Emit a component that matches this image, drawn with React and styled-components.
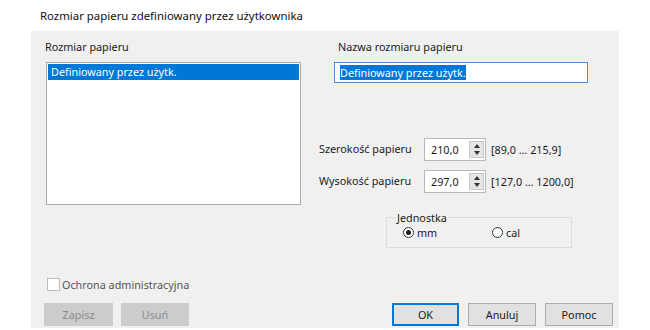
import styled, { createGlobalStyle } from "styled-components";

const Global = createGlobalStyle`
  html, body {
    margin: 0;
    padding: 0;
    background: #ffffff;
  }
  body {
    font-family: "Noto Sans", "Liberation Sans", sans-serif;
    font-size: 10.8px;
    color: #1b1b1b;
  }
`;

const Window = styled.div`
  width: 650px;
  height: 330px;
  overflow: hidden;
`;

const TitleBar = styled.div`
  height: 31px;
  padding-left: 40px;
  display: flex;
  align-items: center;
  font-size: 11.4px;
  color: #111;
  box-sizing: border-box;
  padding-bottom: 1px;
`;

const Panel = styled.div`
  margin-left: 31px;
  width: 588px;
  height: 297px;
  background: #f0f0f0;
  display: flex;
  flex-direction: column;
  box-sizing: border-box;
  padding: 8px 6px 2px 13px;
`;

const TopArea = styled.div`
  display: flex;
  gap: 18px;
  padding-left: 1px;
`;

const LeftCol = styled.div`
  width: 256px;
  display: flex;
  flex-direction: column;
`;

const FieldLabel = styled.div`
  height: 16px;
  line-height: 16px;
  margin-bottom: 7px;
  padding-left: ${(p) => p.$indent || 0}px;
`;

const ListBox = styled.div`
  margin-left: 1px;
  width: 255px;
  height: 143px;
  box-sizing: border-box;
  border: 1px solid #a9a9a9;
  background: #fff;
  padding: 1px;
`;

const ListItem = styled.div`
  height: 16px;
  line-height: 16px;
  padding-left: 3px;
  background: ${(p) => (p.$selected ? "#0078d7" : "transparent")};
  color: ${(p) => (p.$selected ? "#fff" : "#1b1b1b")};
`;

const RightCol = styled.div`
  flex: 1;
  display: flex;
  flex-direction: column;
`;

const NameInput = styled.div`
  margin-left: 15px;
  width: 254px;
  height: 21px;
  box-sizing: border-box;
  border: 1px solid #4a90d0;
  background: #fff;
  display: flex;
  align-items: center;
  padding-left: 5px;
`;

const Highlight = styled.span`
  background: #0078d7;
  color: #fff;
  line-height: 15px;
`;

const SpinRows = styled.div`
  margin-top: 55px;
  display: flex;
  flex-direction: column;
  gap: 9px;
`;

const SpinRow = styled.div`
  display: flex;
  align-items: center;
  height: 23px;
`;

const SpinLabel = styled.div`
  width: 105px;
  margin-top: -2px;
`;

const SpinBox = styled.div`
  width: 62px;
  height: 23px;
  box-sizing: border-box;
  border: 1px solid #b8b8b8;
  background: #fff;
  display: flex;
  align-items: center;
  justify-content: space-between;
  padding: 2px 1px 2px 6px;
`;

const SpinButtons = styled.div`
  width: 15px;
  height: 17px;
  box-sizing: border-box;
  border: 1px solid #c8c8c8;
  background: #e6e6e6;
  display: flex;
  flex-direction: column;
  align-items: center;
  justify-content: space-evenly;
`;

const Arrow = styled.div`
  width: 0;
  height: 0;
  border-left: 3.5px solid transparent;
  border-right: 3.5px solid transparent;
  ${(p) =>
    p.$up
      ? "border-bottom: 4px solid #333;"
      : "border-top: 4px solid #333;"}
`;

const RangeText = styled.div`
  margin-left: 5px;
`;

const GroupBox = styled.fieldset`
  margin: 19px 0 0 67px;
  width: 186px;
  height: 36px;
  box-sizing: border-box;
  border: 1px solid #dcdcdc;
  padding: 0 0 0 16px;
  display: flex;
`;

const Legend = styled.legend`
  padding: 0 1px;
  margin-left: -7px;
  line-height: 11px;
`;

const Radio = styled.label`
  width: ${(p) => p.$w || 60}px;
  display: flex;
  align-items: center;
  gap: 3px;
  height: 13px;
  line-height: 13px;
  margin-top: 3px;
`;

const RadioDot = styled.span`
  width: 11px;
  height: 11px;
  border-radius: 50%;
  box-sizing: border-box;
  border: 1px solid #333;
  background: #fff;
  display: flex;
  align-items: center;
  justify-content: center;
  &::after {
    content: "";
    width: 5px;
    height: 5px;
    border-radius: 50%;
    background: ${(p) => (p.$checked ? "#1b1b1b" : "transparent")};
  }
`;

const CheckRow = styled.div`
  margin-top: auto;
  display: flex;
  align-items: center;
  gap: 2px;
  padding-left: 3px;
  color: #555;
`;

const CheckBox = styled.span`
  width: 13px;
  height: 13px;
  box-sizing: border-box;
  border: 1px solid #bcbcbc;
  background: #fff;
`;

const ButtonRow = styled.div`
  margin-top: 11px;
  display: flex;
  justify-content: space-between;
`;

const ButtonGroup = styled.div`
  display: flex;
  gap: ${(p) => p.$gap}px;
`;

const Button = styled.div`
  width: ${(p) => p.$w || 68}px;
  height: 23px;
  box-sizing: border-box;
  display: flex;
  align-items: center;
  justify-content: center;
  border: ${(p) =>
    p.$default ? "2px solid #0078d7" : p.$disabled ? "1px solid #cccccc" : "1px solid #adadad"};
  background: ${(p) => (p.$disabled ? "#cccccc" : "#e1e1e1")};
  color: ${(p) => (p.$disabled ? "#8a8a8a" : "#1b1b1b")};
`;

function Spinner({ label, value, range }) {
  return (
    <SpinRow>
      <SpinLabel>{label}</SpinLabel>
      <SpinBox>
        <span>{value}</span>
        <SpinButtons>
          <Arrow $up />
          <Arrow />
        </SpinButtons>
      </SpinBox>
      <RangeText>{range}</RangeText>
    </SpinRow>
  );
}

export default function App() {
  return (
    <Window>
      <Global />
      <TitleBar>Rozmiar papieru zdefiniowany przez użytkownika</TitleBar>
      <Panel>
        <TopArea>
          <LeftCol>
            <FieldLabel>Rozmiar papieru</FieldLabel>
            <ListBox>
              <ListItem $selected>Definiowany przez użytk.</ListItem>
            </ListBox>
          </LeftCol>
          <RightCol>
            <FieldLabel $indent={19}>Nazwa rozmiaru papieru</FieldLabel>
            <NameInput>
              <Highlight>Definiowany przez użytk.</Highlight>
            </NameInput>
            <SpinRows>
              <Spinner
                label="Szerokość papieru"
                value="210,0"
                range="[89,0 … 215,9]"
              />
              <Spinner
                label="Wysokość papieru"
                value="297,0"
                range="[127,0 … 1200,0]"
              />
            </SpinRows>
            <GroupBox>
              <Legend>Jednostka</Legend>
              <Radio $w={89}>
                <RadioDot $checked />
                mm
              </Radio>
              <Radio>
                <RadioDot />
                cal
              </Radio>
            </GroupBox>
          </RightCol>
        </TopArea>
        <CheckRow>
          <CheckBox />
          Ochrona administracyjna
        </CheckRow>
        <ButtonRow>
          <ButtonGroup $gap={8}>
            <Button $disabled $w={69}>Zapisz</Button>
            <Button $disabled>Usuń</Button>
          </ButtonGroup>
          <ButtonGroup $gap={9}>
            <Button $default $w={67}>OK</Button>
            <Button>Anuluj</Button>
            <Button>Pomoc</Button>
          </ButtonGroup>
        </ButtonRow>
      </Panel>
    </Window>
  );
}
